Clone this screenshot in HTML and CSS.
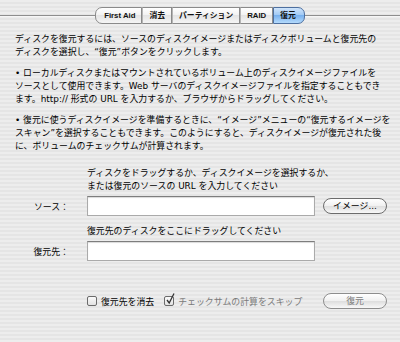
FILE: index.html
```html
<!DOCTYPE html>
<html lang="ja">
<head>
    <meta charset="UTF-8">
    <title>復元</title>
    <link rel="stylesheet" href="styles.css">
</head>
<body>
    <div class="window">
        <div class="tabbar">
            <div class="tabs">
                <span class="tab tab-first">First Aid</span>
                <span class="tab">消去</span>
                <span class="tab">パーティション</span>
                <span class="tab">RAID</span>
                <span class="tab tab-last active">復元</span>
            </div>
        </div>

        <div class="panel">
            <div class="intro">
                <p>ディスクを復元するには、ソースのディスクイメージまたはディスクボリュームと復元先の<br>ディスクを選択し、“復元”ボタンをクリックします。</p>
                <p>• ローカルディスクまたはマウントされているボリューム上のディスクイメージファイルを<br>ソースとして使用できます。Web サーバのディスクイメージファイルを指定することもでき<br>ます。http:// 形式の URL を入力するか、ブラウザからドラッグしてください。</p>
                <p>• 復元に使うディスクイメージを準備するときに、“イメージ”メニューの“復元するイメージを<br>スキャン”を選択することもできます。このようにすると、ディスクイメージが復元された後<br>に、ボリュームのチェックサムが計算されます。</p>
            </div>

            <div class="form">
                <p class="hint">ディスクをドラッグするか、ディスクイメージを選択するか、<br>または復元のソースの URL を入力してください</p>
                <div class="row">
                    <label class="label">ソース：</label>
                    <div class="field"></div>
                    <span class="button">イメージ...</span>
                </div>
                <p class="hint hint-dest">復元先のディスクをここにドラッグしてください</p>
                <div class="row">
                    <label class="label">復元先：</label>
                    <div class="field"></div>
                </div>
            </div>

            <div class="footer">
                <span class="checkbox"></span>
                <span class="check-label">復元先を消去</span>
                <span class="checkbox checked">
                    <svg width="10" height="12" viewBox="0 0 10 12"><path d="M2 7 L4.2 10 L9 0.5" fill="none" stroke="#333" stroke-width="1.3"/></svg>
                </span>
                <span class="check-label disabled">チェックサムの計算をスキップ</span>
                <span class="button button-restore disabled">復元</span>
            </div>
        </div>
    </div>
</body>
</html>
```

FILE: styles.css
```css
* {
    margin: 0;
    padding: 0;
    box-sizing: border-box;
    font-family: "DejaVu Sans", "Noto Sans CJK JP", sans-serif;
}

body {
    width: 400px;
    height: 342px;
    overflow: hidden;
    background: repeating-linear-gradient(to bottom, #ededed 0, #ededed 2px, #e5e5e5 2px, #e5e5e5 4px);
    color: #000;
    font-size: 8.9px;
}

.window {
    height: 100%;
}

.tabbar {
    display: flex;
    justify-content: center;
    padding-top: 7px;
    background: linear-gradient(to bottom, transparent 15px, #8e8e8e 15px, #8e8e8e 16px, #f6f6f6 16px, #f6f6f6 17px, transparent 17px);
}

.tabs {
    display: flex;
}

.tab {
    height: 17px;
    padding: 0 6px;
    font-family: "Liberation Sans", "Noto Sans CJK JP", sans-serif;
    font-size: 7.8px;
    font-weight: bold;
    line-height: 15px;
    color: #111;
    border: 1px solid #8a8a8a;
    border-left: 1px solid #b5b5b5;
    background: linear-gradient(to bottom, #ffffff, #f1f1f1 50%, #e4e4e4 50%, #f5f5f5);
}

.tab-first {
    padding-left: 8px;
    border-left: 1px solid #8a8a8a;
    border-radius: 7px 0 0 7px;
}

.tab-last {
    padding-right: 8px;
    border-radius: 0 7px 7px 0;
}

.tab.active {
    border-color: #4d6f9f;
    background: linear-gradient(to bottom, #cfe4fb, #9ec8f4 50%, #79b1ee 50%, #b4dafc);
}

.panel {
    padding-top: 9px;
}

.intro {
    padding-left: 15px;
}

.intro p {
    line-height: 13px;
    white-space: nowrap;
    margin-bottom: 8px;
}

.form {
    margin-top: 14px;
}

.hint {
    padding-left: 87px;
    line-height: 13px;
    white-space: nowrap;
}

.hint-dest {
    margin-top: 9px;
}

.row {
    display: flex;
    align-items: center;
    margin-top: 3px;
}

.label {
    width: 87px;
    padding-right: 18px;
    text-align: right;
}

.field {
    width: 228px;
    height: 20px;
    background: #fff;
    border: 1px solid #aaa;
    border-top-color: #7d7d7d;
    box-shadow: inset 0 1px 1px rgba(0, 0, 0, 0.15);
}

.button {
    width: 64px;
    height: 16px;
    margin-left: 8px;
    border: 1px solid #6c6c6c;
    border-radius: 8px;
    background: linear-gradient(to bottom, #ffffff, #f0f0f0 50%, #dddddd 50%, #f8f8f8);
    text-align: center;
    line-height: 14px;
}

.footer {
    display: flex;
    align-items: center;
    margin-top: 32px;
    padding-left: 87px;
}

.checkbox {
    position: relative;
    width: 10px;
    height: 10px;
    border: 1px solid #6b6b6b;
    border-radius: 2px;
    background: linear-gradient(to bottom, #fafafa, #e2e2e2);
}

.checkbox svg {
    position: absolute;
    left: 0;
    top: -4px;
}

.check-label {
    margin-left: 4px;
    margin-right: 10px;
}

.disabled {
    color: #7a7a7a;
}

.button-restore {
    margin-left: auto;
    margin-right: 13px;
    border-color: #8d8d8d;
}
```
